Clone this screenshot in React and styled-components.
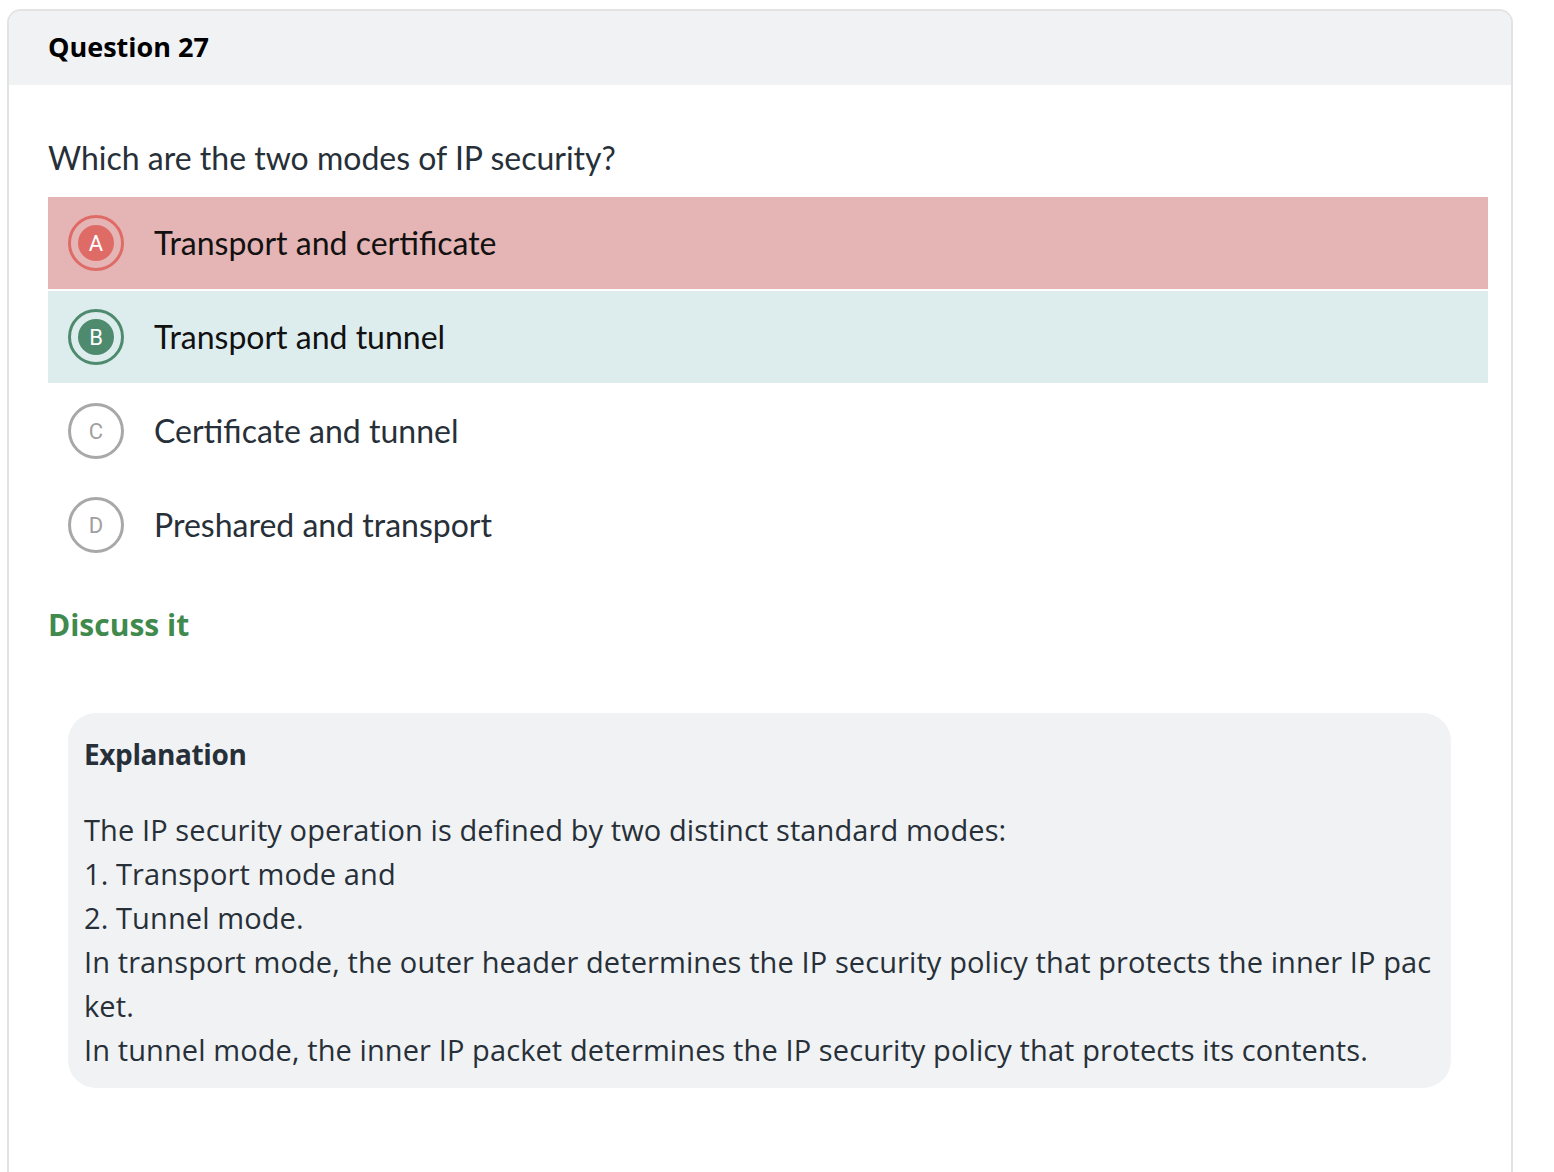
import React from 'react';
import styled, { createGlobalStyle } from 'styled-components';

const GlobalStyle = createGlobalStyle`
  body {
    margin: 0;
    padding: 9px 0 0 7px;
    background: #ffffff;
    font-family: "Lato", "Open Sans", sans-serif;
  }
`;

const options = [
  { letter: 'A', text: 'Transport and certificate', state: 'wrong' },
  { letter: 'B', text: 'Transport and tunnel', state: 'right' },
  { letter: 'C', text: 'Certificate and tunnel', state: 'none' },
  { letter: 'D', text: 'Preshared and transport', state: 'none' },
];

const explanation = [
  'The IP security operation is defined by two distinct standard modes:',
  '1. Transport mode and',
  '2. Tunnel mode.',
  'In transport mode, the outer header determines the IP security policy that protects the inner IP pac',
  'ket.',
  'In tunnel mode, the inner IP packet determines the IP security policy that protects its contents.',
];

const App = () => {
  return (
    <>
      <GlobalStyle />
      <Card>
        <Header>
          <HeaderTitle>Question 27</HeaderTitle>
        </Header>
        <Body>
          <QuestionText>Which are the two modes of IP security?</QuestionText>
          <OptionList>
            {options.map((opt) => (
              <OptionRow key={opt.letter} state={opt.state}>
                <Bubble state={opt.state}>{opt.letter}</Bubble>
                <OptionText state={opt.state}>{opt.text}</OptionText>
              </OptionRow>
            ))}
          </OptionList>
          <DiscussLink href="#">Discuss it</DiscussLink>
          <ExplanationBox>
            <ExplanationTitle>Explanation</ExplanationTitle>
            <ExplanationBody>
              {explanation.map((line, i) => (
                <div key={i}>{line}</div>
              ))}
            </ExplanationBody>
          </ExplanationBox>
        </Body>
      </Card>
    </>
  );
};

const rowColors = {
  wrong: '#e5b4b4',
  right: '#ddeded',
  none: 'transparent',
};

const bubbleColors = {
  wrong: '#df6b67',
  right: '#4e8a6e',
  none: '#a8a8a8',
};

const Card = styled.div`
  width: 1506px;
  min-height: 1180px;
  box-sizing: border-box;
  border: 2px solid #e3e3e3;
  border-bottom: none;
  border-radius: 14px 14px 0 0;
  overflow: hidden;
`;

const Header = styled.div`
  height: 74px;
  background: #f1f2f4;
  display: flex;
  align-items: center;
  padding-left: 39px;
`;

const HeaderTitle = styled.h2`
  margin: 0 0 3px;
  font-family: "Open Sans", "Noto Sans", sans-serif;
  font-size: 27px;
  font-weight: 700;
  color: #000000;
`;

const Body = styled.div`
  padding: 53px 23px 0 39px;
`;

const QuestionText = styled.p`
  margin: 0 0 19px;
  font-size: 32px;
  line-height: 40px;
  color: #273038;
`;

const OptionList = styled.div`
  display: flex;
  flex-direction: column;
  gap: 2px;
`;

const OptionRow = styled.div`
  height: 92px;
  display: flex;
  align-items: center;
  gap: 30px;
  padding-left: 20px;
  background: ${(p) => rowColors[p.state]};
`;

const Bubble = styled.span`
  width: 56px;
  height: 56px;
  flex-shrink: 0;
  box-sizing: border-box;
  border-radius: 50%;
  border: 3px solid ${(p) => bubbleColors[p.state]};
  padding: ${(p) => (p.state === 'none' ? '0' : '7px')};
  background: ${(p) => (p.state === 'none' ? 'transparent' : bubbleColors[p.state])};
  background-clip: content-box;
  display: flex;
  align-items: center;
  justify-content: center;
  font-family: "Roboto", "Liberation Sans", sans-serif;
  font-size: 22px;
  color: ${(p) => (p.state === 'none' ? '#a0a0a0' : '#ffffff')};
`;

const OptionText = styled.span`
  font-size: 32px;
  margin-top: -2px;
  color: ${(p) => (p.state === 'none' ? '#273038' : '#111111')};
`;

const DiscussLink = styled.a`
  display: block;
  margin-top: 34px;
  font-family: "Open Sans", "Noto Sans", sans-serif;
  font-size: 30px;
  line-height: 40px;
  font-weight: 700;
  color: #3f8a4c;
  text-decoration: none;
`;

const ExplanationBox = styled.div`
  margin: 68px 0 0 20px;
  width: 1383px;
  box-sizing: border-box;
  background: #f1f2f4;
  border-radius: 28px;
  padding: 21px 16px 16px;
  color: #273038;
`;

const ExplanationTitle = styled.h3`
  margin: 0 0 34px;
  font-family: "Open Sans", "Noto Sans", sans-serif;
  font-size: 28px;
  line-height: 40px;
  font-weight: 700;
  letter-spacing: -0.4px;
`;

const ExplanationBody = styled.div`
  font-family: "Open Sans", "Noto Sans", sans-serif;
  font-size: 29px;
  line-height: 44px;
  letter-spacing: 0.1px;
  white-space: nowrap;
`;

export default App;
